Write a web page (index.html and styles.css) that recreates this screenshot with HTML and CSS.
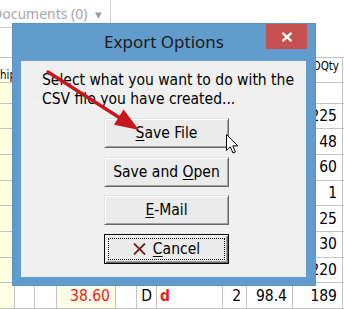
FILE: index.html
```html
<!DOCTYPE html>
<html>
<head>
<meta charset="utf-8">
<link rel="stylesheet" href="styles.css">
</head>
<body>
<div class="app">
  <div class="toolbar">
    <div class="docs"><span class="docs-label">Documents (0)</span><span class="caret">▾</span></div>
  </div>
  <div class="grid">
    <div class="row head">
      <div class="c open"><span class="h2">hip</span></div><div class="c"></div><div class="c"></div><div class="c"></div><div class="c"></div><div class="c"></div><div class="c"></div><div class="c"></div><div class="c"></div><div class="c hr"><span class="h1">POQty</span></div><div class="c end"></div>
    </div>
    <div class="row blank">
      <div class="c y"></div><div class="c"></div><div class="c"></div><div class="c"></div><div class="c"></div><div class="c"></div><div class="c"></div><div class="c"></div><div class="c"></div><div class="c"></div><div class="c end"></div>
    </div>
    <div class="row">
      <div class="c y"></div><div class="c"></div><div class="c"></div><div class="c"></div><div class="c"></div><div class="c"></div><div class="c"></div><div class="c"></div><div class="c"></div><div class="c num">225</div><div class="c end"></div>
    </div>
    <div class="row">
      <div class="c y"></div><div class="c"></div><div class="c"></div><div class="c"></div><div class="c"></div><div class="c"></div><div class="c"></div><div class="c"></div><div class="c"></div><div class="c num">48</div><div class="c end"></div>
    </div>
    <div class="row">
      <div class="c y"></div><div class="c"></div><div class="c"></div><div class="c"></div><div class="c"></div><div class="c"></div><div class="c"></div><div class="c"></div><div class="c"></div><div class="c num">60</div><div class="c end"></div>
    </div>
    <div class="row">
      <div class="c y"></div><div class="c"></div><div class="c"></div><div class="c"></div><div class="c"></div><div class="c"></div><div class="c"></div><div class="c"></div><div class="c"></div><div class="c num">1</div><div class="c end"></div>
    </div>
    <div class="row">
      <div class="c y"></div><div class="c"></div><div class="c"></div><div class="c"></div><div class="c"></div><div class="c"></div><div class="c"></div><div class="c"></div><div class="c"></div><div class="c num">25</div><div class="c end"></div>
    </div>
    <div class="row">
      <div class="c y"></div><div class="c"></div><div class="c"></div><div class="c"></div><div class="c"></div><div class="c"></div><div class="c"></div><div class="c"></div><div class="c"></div><div class="c num">30</div><div class="c end"></div>
    </div>
    <div class="row">
      <div class="c y"></div><div class="c"></div><div class="c"></div><div class="c"></div><div class="c"></div><div class="c"></div><div class="c"></div><div class="c"></div><div class="c"></div><div class="c num">220</div><div class="c end"></div>
    </div>
    <div class="row">
      <div class="c y"></div><div class="c"></div><div class="c"></div><div class="c num red y2">38.60</div><div class="c"></div><div class="c mid">D</div><div class="c red bold">d</div><div class="c num">2</div><div class="c num">98.4</div><div class="c num">189</div><div class="c end"></div>
    </div>
  </div>
</div>

<div class="dialog">
  <div class="titlebar">
    <span></span>
    <span class="title">Export Options</span>
    <button class="close" aria-label="Close"><svg width="12" height="10" viewBox="0 0 12 10"><path d="M1.5 0.8 L10.5 9.2 M10.5 0.8 L1.5 9.2" stroke="#fff" stroke-width="2.3" fill="none"/></svg></button>
  </div>
  <div class="client">
    <p class="msg">Select what you want to do with the<br>CSV file you have created...</p>
    <div class="buttons">
      <button class="btn"><span><u>S</u>ave File</span></button>
      <button class="btn"><span>Save and <u>O</u>pen</span></button>
      <button class="btn"><span><u>E</u>-Mail</span></button>
      <button class="btn default"><span class="focus"><svg class="xicon" width="13" height="12" viewBox="0 0 13 12"><path d="M1 0.5 L12 11.5 M12 0.5 L1 11.5" stroke="#7a1f1f" stroke-width="1.8" fill="none"/></svg><span><u>C</u>ancel</span></span></button>
    </div>
  </div>
</div>

<svg class="arrow" width="344" height="309" viewBox="0 0 344 309">
  <line x1="48" y1="72" x2="120" y2="118" stroke="#c8161e" stroke-width="3.4" stroke-linecap="round"/>
  <polygon points="139,130 114,124.7 123.6,109.5" fill="#c8161e"/>
</svg>

<svg class="cursor" width="14" height="21" viewBox="0 0 14 21">
  <path d="M0.5 0.5 L0.5 16.5 L4.3 12.8 L7 19 L9.4 18 L6.8 11.9 L11.8 11.9 Z" fill="#fff" stroke="#000" stroke-width="1"/>
</svg>
</body>
</html>
```

FILE: styles.css
```css
* { box-sizing: border-box; }
html, body { margin: 0; padding: 0; }
body {
  width: 344px;
  height: 309px;
  overflow: hidden;
  background: #fff;
  font-family: "DejaVu Sans Condensed", "DejaVu Sans", sans-serif;
  font-stretch: condensed;
  font-size: 15.5px;
  color: #000;
  position: relative;
}

.app { width: 344px; height: 309px; display: flex; flex-direction: column; }

.toolbar { height: 62px; }
.docs {
  width: 111px;
  height: 28px;
  border-right: 1px solid #d4d4d4;
  border-bottom: 1px solid #c8c8c8;
  display: flex;
  align-items: center;
  color: #a6a6a6;
  font-family: "Noto Sans", sans-serif;
  font-stretch: normal;
  font-size: 14px;
  white-space: nowrap;
  overflow: hidden;
}
.docs-label { margin-left: -8px; }
.caret { margin-left: 7px; font-size: 13px; color: #9a9a9a; }

.grid { display: flex; flex-direction: column; }
.row {
  display: grid;
  grid-template-columns: 15px 20px 22px 59px 21px 20px 66px 24px 46px 50px 1fr;
  height: 25.7px;
}
.row.head { height: 23px; font-size: 11.5px; }
.row.blank { height: 23.5px; }
.c {
  border-right: 1px solid #c4c4c4;
  border-bottom: 1px solid #c4c4c4;
  overflow: hidden;
  white-space: nowrap;
  display: flex;
  align-items: center;
  padding: 0 3px;
}
.head .c { align-items: flex-start; border-top: 1px solid #c4c4c4; background: #fff; padding: 0; }
.head .c.open { overflow: visible; position: relative; z-index: 1; background: transparent; }
.head .c.hr { justify-content: flex-end; padding-right: 3px; }
.c.end { border-right: none; }
.c.y { background: #ffffe1; }
.c.y2 { background: #fffde6; }
.c.num { justify-content: flex-end; padding-right: 5px; }
.c.mid { justify-content: center; }
.red { color: #f01818; }
.bold { font-weight: bold; }
.h1 { padding-top: 1px; }
.h2 { padding-top: 10px; }

/* dialog overlay */
.dialog {
  position: absolute;
  z-index: 2;
  left: 12px;
  top: 23px;
  width: 304px;
  height: 263px;
  background: #629ccd;
  border: 1px solid #5a92c2;
  display: flex;
  flex-direction: column;
  padding: 0 9px 8px 8px;
}
.titlebar {
  height: 37px;
  display: grid;
  grid-template-columns: 1fr auto 1fr;
  align-items: start;
  margin: 0 -9px 0 -8px;
}
.title {
  font-family: "Noto Sans", sans-serif;
  font-stretch: normal;
  font-size: 17px;
  color: #1b1b1b;
  padding-top: 8px;
  line-height: 20px;
}
.close {
  justify-self: end;
  margin-right: 8px;
  width: 41px;
  height: 25px;
  background: #c75050;
  border: none;
  padding: 0;
  display: flex;
  align-items: center;
  justify-content: center;
}
.client {
  flex: 1;
  background: #f0f0f0;
  display: flex;
  flex-direction: column;
}
.msg {
  margin: 0;
  padding: 10px 0 0 21px;
  line-height: 19px;
  height: 57px;
  color: #000;
}
.buttons {
  display: flex;
  flex-direction: column;
  gap: 8.5px;
  padding-left: 83px;
}
.btn {
  width: 125px;
  height: 30px;
  font: inherit;
  color: #000;
  background: #ebebeb;
  border: 1px solid;
  border-color: #e2e2e2 #696969 #696969 #e2e2e2;
  box-shadow: inset 1px 1px 0 #fff, inset -1px -1px 0 #a0a0a0;
  padding: 0;
  display: flex;
  align-items: center;
  justify-content: center;
  white-space: nowrap;
}
.btn u { text-decoration-thickness: 1px; text-underline-offset: 2px; }
.btn.default {
  border: 1px solid #000;
  box-shadow: inset 1px 1px 0 #fff, inset -1px -1px 0 #696969, inset -2px -2px 0 #a0a0a0;
  padding: 3px;
}
.focus {
  width: 100%;
  height: 100%;
  border: 1px dotted #000;
  display: flex;
  align-items: center;
  justify-content: center;
  gap: 7px;
}
.xicon { display: block; }

.arrow { position: absolute; z-index: 3; left: 0; top: 0; pointer-events: none; }
.cursor { position: absolute; z-index: 4; left: 225.5px; top: 133.5px; }
```
